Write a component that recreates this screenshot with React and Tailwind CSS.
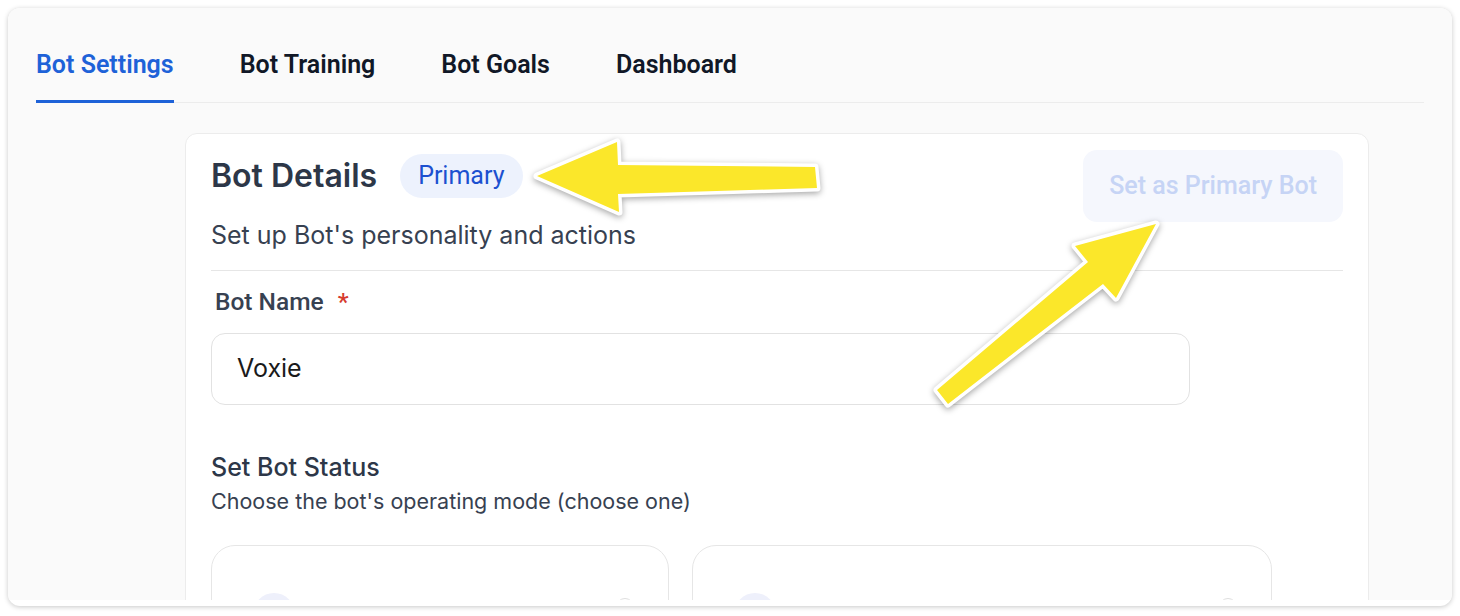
import React from 'react';

const tabs = ['Bot Settings', 'Bot Training', 'Bot Goals', 'Dashboard'];

const roboto = { fontFamily: 'Roboto, "Liberation Sans", sans-serif' };

// yellow annotation arrows drawn over the screenshot
const Arrows = () => (
  <svg
    width="1460"
    height="616"
    viewBox="0 0 1460 616"
    className="pointer-events-none absolute left-0 top-0 drop-shadow-[0_2px_3px_rgba(0,0,0,0.35)]"
  >
    <g fill="#fbe72a" stroke="#ffffff" strokeWidth="7" strokeLinejoin="round" paintOrder="stroke">
      <polygon points="537,176 617,142 618,165 815,167 817,188 618,194 619,212" />
      <polygon points="1156,224 1075,246 1088,262 937,390 948,404 1103,284 1116,298" />
    </g>
  </svg>
);

const StatusCard = ({ width }) => (
  <div className={`relative h-[120px] shrink-0 rounded-[24px] border border-[#e6e6e6] bg-white ${width}`}>
    <div className="absolute left-[41px] top-[47px] h-[42px] w-[42px] rounded-full bg-[#eef0fb]" />
    <div className="absolute right-[34px] top-[52px] h-[18px] w-[18px] rounded-full border border-[#dedede]" />
  </div>
);

export default function App() {
  return (
    <div className="relative h-[616px] w-[1460px] bg-white p-2" style={{ fontFamily: 'Inter, "Noto Sans", sans-serif' }}>
      <div className="h-[598px] overflow-hidden rounded-xl bg-white shadow-[0_1px_5px_rgba(0,0,0,0.22)]">
        <div className="h-[592px] overflow-hidden bg-[#fafafa] px-[28px]">
          {/* tabs */}
          <div className="flex gap-[66px] border-b border-[#ececec]" style={roboto}>
            {tabs.map((t, i) => (
              <div
                key={t}
                className={`-mb-px border-b-[3px] pb-[19px] pt-[41px] text-[25px] font-semibold leading-8 ${
                  i === 0 ? 'border-[#1e62d8] text-[#1e62d8]' : 'border-transparent text-[#111827]'
                }`}
              >
                {t}
              </div>
            ))}
          </div>

          {/* bot details card */}
          <div className="ml-[149px] mt-[30px] w-[1184px] rounded-xl border border-[#ececec] bg-white px-[25px] pt-[16px]">
            <div className="flex items-start justify-between">
              <div className="pt-[4px]">
                <div className="flex items-center">
                  <h2 className="text-[32px] font-semibold leading-[44px] text-[#2d3748]">Bot Details</h2>
                  <span
                    className="ml-[23px] flex h-[44px] items-center rounded-full bg-[#edf2fd] px-[18px] text-[25px] text-[#1c50d0]"
                    style={roboto}
                  >
                    Primary
                  </span>
                </div>
                <p className="mt-[21px] text-[25px] leading-8 text-[#374151]">Set up Bot's personality and actions</p>
              </div>
              <button
                className="h-[72px] rounded-[14px] bg-[#f5f7fd] px-[26px] text-[25px] font-medium text-[#c6d4f5]"
                style={roboto}
              >
                Set as Primary Bot
              </button>
            </div>

            <div className="mt-[19px] h-px bg-[#e6e6e6]" />

            <label className="mt-[17px] block pl-[4px] text-[24.5px] font-medium leading-7 text-[#374151]" style={roboto}>
              Bot Name <span className="ml-[8px] text-[#d63b2e]">*</span>
            </label>
            <div className="mt-[17px] flex h-[72px] w-[979px] items-center rounded-[14px] border border-[#e2e2e2] bg-white pl-[25px] text-[25px] text-[#1a1a1a]">
              Voxie
            </div>

            <h3 className="mt-[46px] text-[25px] font-medium leading-8 text-[#2d3748]">Set Bot Status</h3>
            <p className="mt-[4px] text-[21.5px] leading-7 text-[#374151]">Choose the bot's operating mode (choose one)</p>

            <div className="mt-[30px] flex gap-[23px]">
              <StatusCard width="w-[458px]" />
              <StatusCard width="w-[580px]" />
            </div>
          </div>
        </div>
      </div>
      <Arrows />
    </div>
  );
}
